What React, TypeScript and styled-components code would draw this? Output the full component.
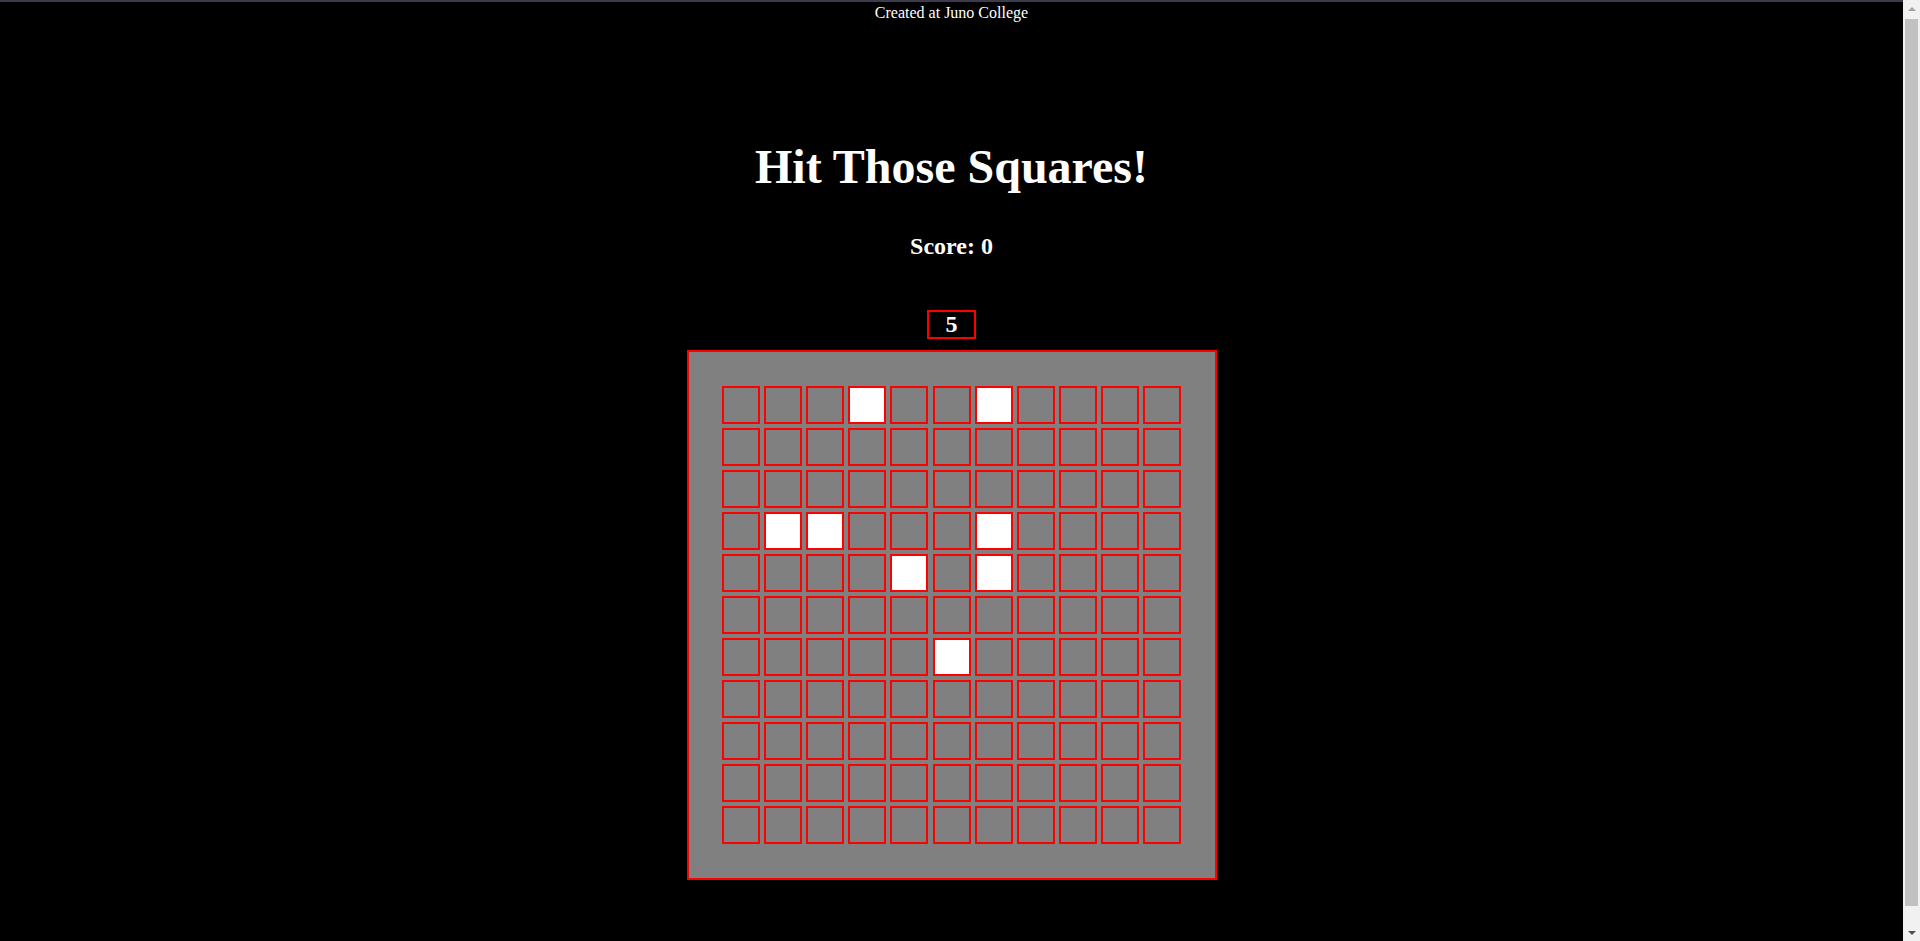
import React from "react";
import styled, { createGlobalStyle } from "styled-components";

const GlobalStyle = createGlobalStyle`
  html, body {
    margin: 0;
    padding: 0;
  }
  body {
    background: #000000;
    color: #ffffff;
    font-family: "Liberation Serif", "Times New Roman", serif;
  }
`;

const Shell = styled.div`
  display: grid;
  grid-template-columns: 1fr 17px;
  align-items: start;
`;

const Page = styled.div`
  border-top: 2px solid #3b3b4b;
  min-width: 0;
`;

const Rail = styled.div`
  position: sticky;
  top: 0;
  height: 100vh;
  display: flex;
  flex-direction: column;
  background: #f1f1f1;
`;

const ArrowButton = styled.div`
  height: 17px;
  flex: none;
  display: flex;
  align-items: center;
  justify-content: center;
`;

const Triangle = styled.span<{ $down?: boolean }>`
  width: 0;
  height: 0;
  border-left: 4px solid transparent;
  border-right: 4px solid transparent;
  ${(p) =>
    p.$down
      ? "border-top: 4px solid #505050;"
      : "border-bottom: 4px solid #a3a3a3;"}
`;

const Track = styled.div`
  flex: 1;
  padding: 2px 2px 0;
`;

const Thumb = styled.div`
  height: 887px;
  background: #c1c1c1;
`;

const Credit = styled.p`
  margin: 0;
  padding-top: 2px;
  font-size: 16px;
  line-height: 18px;
  text-align: center;
  color: #ffffff;
`;

const Main = styled.main`
  display: flex;
  flex-direction: column;
  align-items: center;
  padding-bottom: 82px;
`;

const Title = styled.h1`
  margin: 117px 0 0;
  font-size: 48px;
  font-weight: 700;
  line-height: 55px;
`;

const Score = styled.h2`
  margin: 38px 0 0;
  font-size: 24px;
  font-weight: 700;
  line-height: 28px;
`;

const Timer = styled.div`
  margin-top: 50px;
  box-sizing: border-box;
  width: 49px;
  height: 29px;
  border: 2px solid #ff0000;
  font-size: 24px;
  font-weight: 700;
  line-height: 25px;
  text-align: center;
`;

const Board = styled.div`
  margin-top: 11px;
  box-sizing: border-box;
  width: 530px;
  height: 530px;
  border: 2px solid #ff0000;
  background: #808080;
  display: flex;
  align-items: center;
  justify-content: center;
`;

const Grid = styled.div`
  display: grid;
  grid-template-columns: repeat(11, 38px);
  grid-auto-rows: 38px;
  gap: 4.1px;
`;

const Square = styled.div<{ $lit: boolean }>`
  box-sizing: border-box;
  border: 2px solid #ff0000;
  background: ${(p) => (p.$lit ? "#ffffff" : "#808080")};
`;

const lit = new Set(["0-3", "0-6", "3-1", "3-2", "3-6", "4-4", "4-6", "6-5"]);

export default function App() {
  const cells: React.ReactNode[] = [];
  for (let r = 0; r < 11; r++) {
    for (let c = 0; c < 11; c++) {
      cells.push(<Square key={`${r}-${c}`} $lit={lit.has(`${r}-${c}`)} />);
    }
  }
  return (
    <>
      <GlobalStyle />
      <Shell>
        <Page>
          <Credit>Created at Juno College</Credit>
          <Main>
            <Title>Hit Those Squares!</Title>
            <Score>Score: 0</Score>
            <Timer>5</Timer>
            <Board>
              <Grid>{cells}</Grid>
            </Board>
          </Main>
        </Page>
        <Rail aria-hidden="true">
          <ArrowButton>
            <Triangle />
          </ArrowButton>
          <Track>
            <Thumb />
          </Track>
          <ArrowButton>
            <Triangle $down />
          </ArrowButton>
        </Rail>
      </Shell>
    </>
  );
}
